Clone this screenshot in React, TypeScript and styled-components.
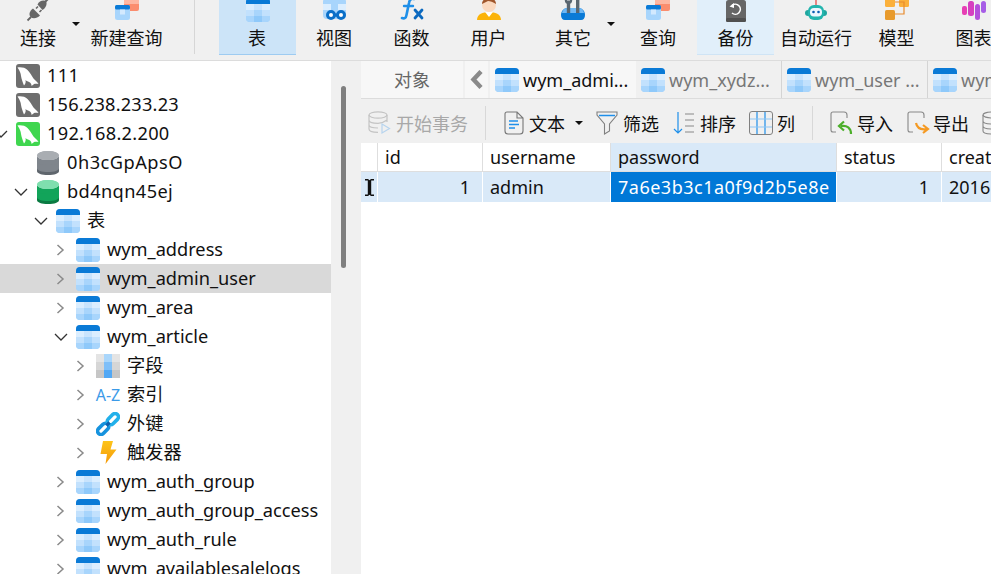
import React from "react";
import styled, { createGlobalStyle } from "styled-components";

const GlobalStyle = createGlobalStyle`
  html, body {
    margin: 0;
    padding: 0;
    background: #fff;
  }
  body {
    font-family: "Noto Sans", "Noto Sans CJK SC", sans-serif;
    font-size: 18px;
    color: #111;
  }
`;

/* ---------- icons ---------- */

function TableIcon({ size = 24 }: { size?: number }) {
  return (
    <svg width={size} height={size} viewBox="0 0 24 24">
      <defs>
        <clipPath id="tbl">
          <rect width="24" height="24" rx="4" />
        </clipPath>
      </defs>
      <g clipPath="url(#tbl)">
        <rect width="24" height="24" fill="#9ed0fb" />
        <rect width="24" height="6" fill="#0a7ad6" />
        <rect y="6" width="8" height="6" fill="#dbeeff" />
        <rect x="8" y="6" width="8" height="6" fill="#c9e4fd" />
        <rect x="16" y="6" width="8" height="6" fill="#dbeeff" />
        <rect y="12" width="8" height="6" fill="#c2e1fd" />
        <rect x="8" y="12" width="8" height="6" fill="#a8d5fc" />
        <rect x="16" y="12" width="8" height="6" fill="#c2e1fd" />
        <rect y="18" width="8" height="6" fill="#a8d5fc" />
        <rect x="8" y="18" width="8" height="6" fill="#8fc9fa" />
        <rect x="16" y="18" width="8" height="6" fill="#a8d5fc" />
      </g>
    </svg>
  );
}

function DolphinIcon({ color }: { color: string }) {
  return (
    <svg width="24" height="24" viewBox="0 0 24 24">
      <rect width="24" height="24" rx="3" fill={color} />
      <path
        d="M1.5 3.5 C5 3 9 3.5 11.5 6 C14 8.5 15.5 11.5 17.5 14.5 C19 16.5 21 17.5 22.5 20 C20.5 19.5 19.5 19.5 18 20 C17 21 16 21.5 15.5 22 C15.5 20.5 15 19.5 14 18.5 C12 17.5 10.5 17 9.5 16 C10 18 9.5 20 8 21.5 C7 19 5.5 15 5 12 C4.8 9.5 4 7 1.5 3.5 Z"
        fill="#fff"
      />
    </svg>
  );
}

function DbIcon({ top, mid, bottom }: { top: string; mid: string; bottom: string }) {
  return (
    <svg width="22" height="24" viewBox="0 0 22 24">
      <path d="M0 17 V20 C0 22.5 4.5 24 11 24 C17.5 24 22 22.5 22 20 V17 Z" fill={bottom} />
      <path d="M0 9 V17 C0 19.5 4.5 21 11 21 C17.5 21 22 19.5 22 17 V9 Z" fill={mid} />
      <ellipse cx="11" cy="4.5" rx="11" ry="4.5" fill={top} />
      <path d="M0 4.5 V10 C0 12.5 4.5 14 11 14 C17.5 14 22 12.5 22 10 V4.5 C22 7 17.5 9 11 9 C4.5 9 0 7 0 4.5 Z" fill={mid} />
      <ellipse cx="11" cy="4.5" rx="11" ry="4.5" fill={top} />
    </svg>
  );
}

function FieldIcon() {
  return (
    <svg width="24" height="24" viewBox="0 0 24 24">
      <rect width="24" height="24" fill="#e4e4e4" />
      <rect y="8" width="24" height="8" fill="#d6d6d6" />
      <rect y="16" width="24" height="8" fill="#c6c6c6" />
      <rect x="8" width="8" height="8" fill="#a9d6fb" />
      <rect x="8" y="8" width="8" height="8" fill="#7fbff8" />
      <rect x="8" y="16" width="8" height="8" fill="#51a8f5" />
    </svg>
  );
}

function LinkIcon() {
  return (
    <svg width="24" height="24" viewBox="0 0 24 24" fill="none">
      <rect x="-7" y="-3.4" width="13" height="6.8" rx="3.4" transform="translate(7.5 16.5) rotate(-45)" stroke="#1793de" strokeWidth="3.6" />
      <rect x="-6" y="-3.4" width="13" height="6.8" rx="3.4" transform="translate(16.5 7.5) rotate(-45)" stroke="#22b0ea" strokeWidth="3.6" />
      <path d="M10.5 13.5 L13.5 10.5" stroke="#0f5fae" strokeWidth="3.2" />
    </svg>
  );
}

function BoltIcon() {
  return (
    <svg width="24" height="24" viewBox="0 0 24 24">
      <defs>
        <linearGradient id="bolt" x1="0" y1="0" x2="0" y2="1">
          <stop offset="0" stopColor="#fdc41a" />
          <stop offset="1" stopColor="#f59a0a" />
        </linearGradient>
      </defs>
      <path d="M7 0 H17 L14.5 8.5 H20.5 L9.5 23 L11 13 H4.5 Z" fill="url(#bolt)" />
    </svg>
  );
}

function PlugIcon() {
  return (
    <svg width="24" height="24" viewBox="0 0 24 24" fill="#666" stroke="none">
      <path d="M11.5 6.5 C13 3 17 1.5 20 3 C21.5 6 20 10 16.5 12 Z" />
      <path d="M19 4 L24 -1" stroke="#666" strokeWidth="2" />
      <path d="M7 10.5 L14 17.5 C11 20.5 7 21 4.5 19 C2.5 16.5 3.5 13 7 10.5 Z" />
      <path d="M5 19 L1.5 22.5" stroke="#666" strokeWidth="1.8" />
      <path d="M10 10.5 L12 8.5 M13.5 14 L15.5 12" stroke="#666" strokeWidth="1.6" />
    </svg>
  );
}

function QueryIcon() {
  return (
    <svg width="24" height="24" viewBox="0 0 24 24">
      <rect x="9" y="-4" width="15" height="17" rx="2" fill="#fb8d6e" />
      <rect x="9" y="2" width="15" height="4" fill="#fdb7a2" />
      <g transform="translate(0 7)">
        <rect width="15" height="15" rx="2.5" fill="#a8d5fc" />
        <rect width="15" height="4.5" rx="1.5" fill="#0a7ad6" />
        <rect x="5" y="4.5" width="5" height="5" fill="#d3e9fe" />
      </g>
    </svg>
  );
}

function ViewIcon() {
  return (
    <svg width="24" height="24" viewBox="0 0 24 24">
      <rect width="23" height="21" rx="4" fill="#a8d5fc" />
      <rect y="6" width="8" height="6" fill="#dbeeff" />
      <rect x="15" y="6" width="8" height="6" fill="#dbeeff" />
      <circle cx="8" cy="17" r="3.5" fill="#fff" stroke="#0a6fc8" strokeWidth="3" />
      <circle cx="18" cy="17" r="3.5" fill="#fff" stroke="#0a6fc8" strokeWidth="3" />
      <rect x="10" y="15.6" width="6" height="3" fill="#0a6fc8" />
    </svg>
  );
}

function FxIcon() {
  return (
    <svg width="24" height="24" viewBox="0 0 24 24" fill="none" strokeLinecap="round">
      <path d="M14 1 C11 0 9.5 2 9 5 L6.5 17 C6 20 4.5 21 2 20" stroke="#1f8fe8" strokeWidth="2.6" />
      <path d="M4 8 H13" stroke="#1f8fe8" strokeWidth="2.4" />
      <path d="M15 12 L22 20 M22 12 L15 20" stroke="#0b69bf" strokeWidth="2.8" />
    </svg>
  );
}

function UserIcon() {
  return (
    <svg width="24" height="24" viewBox="0 0 24 24">
      <path d="M0 22 C0 16 6 14 12 14 C18 14 24 16 24 22 Z" fill="#fbb30a" />
      <path d="M8 14 H16 L12 19 Z" fill="#fff" />
      <circle cx="12" cy="7" r="7" fill="#fbd9bf" />
      <path d="M5 6 C5 -2 19 -2 19 6 C16 4 13 3 11 3 C9 4 7 5 5 6 Z" fill="#a0562b" />
    </svg>
  );
}

function ToolsIcon() {
  return (
    <svg width="24" height="24" viewBox="0 0 24 24">
      <path d="M0 17 C0 13 3 10 6 10 H18 C21 10 24 13 24 17 C24 20 22.5 22 20 22 H4 C1.5 22 0 20 0 17 Z" fill="#0a7ad6" />
      <path d="M1 15 C1.5 12 3.5 10 6 10 H18 C20.5 10 22.5 12 23 15 Z" fill="#6fb8f5" />
      <rect x="5.8" y="4" width="3.4" height="11" fill="#5a6670" />
      <rect x="15" y="1" width="3.4" height="14" fill="#5a6670" />
      <path d="M3.8 0 V2.5 C3.8 5 5.5 6 7.5 6 C9.5 6 11.2 5 11.2 2.5 V0 H9 V2.5 H6 V0 Z" fill="#5a6670" />
    </svg>
  );
}

function BackupIcon() {
  return (
    <svg width="20" height="22" viewBox="0 0 20 22">
      <rect width="20" height="22" rx="2.5" fill="#666" />
      <rect y="18" width="20" height="4" rx="1.5" fill="#505050" />
      <path d="M6 5.5 A5 5 0 1 1 6 13" fill="none" stroke="#fff" strokeWidth="1.6" />
      <path d="M3.5 6.5 L8 3 V8 Z" fill="#fff" />
    </svg>
  );
}

function RobotIcon() {
  return (
    <svg width="22" height="22" viewBox="0 0 22 22">
      <rect x="0" y="10" width="22" height="6" rx="3" fill="#1fa7a0" />
      <rect x="3" y="5" width="16" height="15" rx="6" fill="#24b5ae" />
      <rect x="5" y="8" width="12" height="8.5" rx="4" fill="#eef7ff" />
      <circle cx="8.5" cy="12" r="1.3" fill="#0a5fb4" />
      <circle cx="13.5" cy="12" r="1.3" fill="#0a5fb4" />
      <rect x="10.3" y="0" width="1.4" height="5" fill="#e25b5b" />
    </svg>
  );
}

function ModelIcon() {
  return (
    <svg width="24" height="24" viewBox="0 0 24 24" fill="#fbb03b">
      <rect x="0" y="-2" width="10" height="11" rx="1.5" />
      <rect x="14" y="-2" width="10" height="11" rx="1.5" />
      <rect x="0" y="12" width="10" height="10" rx="1.5" fill="#e89a2c" />
      <path d="M10 4 H19 V16 H10" fill="none" stroke="#e88a2c" strokeWidth="1.2" />
    </svg>
  );
}

function ChartIcon() {
  return (
    <svg width="24" height="24" viewBox="0 0 24 24">
      <rect x="0" y="8" width="5" height="9" rx="2" fill="#e63fb4" />
      <rect x="6" y="3" width="6" height="15" rx="2.5" fill="#d63fc0" />
      <rect x="13" y="6" width="5" height="16" rx="2.5" fill="#b44fdc" />
      <rect x="19" y="3" width="5" height="12" rx="2.5" fill="#a65ce6" />
    </svg>
  );
}

function TxIcon() {
  return (
    <svg width="23" height="24" viewBox="0 0 23 24" fill="none" stroke="#c4c4c4" strokeWidth="1.2">
      <ellipse cx="10" cy="4" rx="9" ry="3.2" />
      <path d="M1 4 V18 C1 20 5 21.3 10 21.3 M19 4 V11 M1 9 C1 11 5 12.3 10 12.3 C12 12.3 15 12 19 9 M1 14 C1 16 5 17 10 17" />
      <path d="M14 13 L21.5 17.5 L14 22 Z" stroke="#b7d4ee" />
    </svg>
  );
}

function TextIcon() {
  return (
    <svg width="20" height="24" viewBox="0 0 20 24" fill="none">
      <path d="M3 1 H13 L19 7 V20 C19 22 18 23 16 23 H4 C2 23 1 22 1 20 V3 C1 2 2 1 3 1 Z M13 1 V7 H19" stroke="#777" strokeWidth="1.1" />
      <path d="M5 10 H14 M5 13.5 H15 M5 17 H11" stroke="#1e8fea" strokeWidth="1.4" />
    </svg>
  );
}

function FilterIcon() {
  return (
    <svg width="22" height="24" viewBox="0 0 22 24" fill="none">
      <path d="M1 1 H21 V4 L13.5 13 V20 L8.5 23 V13 L1 4 Z" stroke="#808080" strokeWidth="1.1" />
      <path d="M3 4.5 H19" stroke="#1e8fea" strokeWidth="1.5" />
    </svg>
  );
}

function SortIcon() {
  return (
    <svg width="22" height="24" viewBox="0 0 22 24" fill="none">
      <path d="M5 1 V22 M1 18 L5 22 L9 18" stroke="#1e8fea" strokeWidth="1.2" />
      <path d="M12 3 H21 M12 9 H21 M12 15 H21 M12 21 H21" stroke="#888" strokeWidth="1.2" />
    </svg>
  );
}

function ColumnIcon() {
  return (
    <svg width="24" height="24" viewBox="0 0 24 24" fill="none">
      <rect x="0.5" y="0.5" width="23" height="23" rx="2.5" stroke="#808080" />
      <path d="M8 1 V23 M16 1 V23" stroke="#1e8fea" strokeWidth="1.2" />
      <path d="M1 8 H23 M1 16 H23" stroke="#8ec6f4" strokeWidth="1.2" />
    </svg>
  );
}

function ImportIcon({ color, flip }: { color: string; flip?: boolean }) {
  return (
    <svg width="24" height="24" viewBox="0 0 24 24" fill="none">
      <path d="M6 21 H3 C1.5 21 1 20 1 19 V3 C1 2 1.5 1 3 1 H14 C16 1 17 2 17 4 V7" stroke="#888" strokeWidth="1.1" />
      {flip ? (
        <path d="M9 12 C10 17 14 19 20 18 M16 14 L21 18 L16 22" stroke={color} strokeWidth="2.2" />
      ) : (
        <path d="M21 23 C21 17 17 14 11 15 M14 10.5 L9 15 L14 19.5" stroke={color} strokeWidth="2.2" />
      )}
    </svg>
  );
}

function DbOutline() {
  return (
    <svg width="24" height="24" viewBox="0 0 24 24" fill="none" stroke="#888" strokeWidth="1.1">
      <ellipse cx="10" cy="4" rx="9" ry="3" />
      <path d="M1 4 V20 C1 22 5 23 10 23 C15 23 19 22 19 20 V4 M1 10 C1 12 5 13 10 13 C15 13 19 12 19 10 M1 15 C1 17 5 18 10 18 C15 18 19 17 19 15" />
    </svg>
  );
}

function Chevron({ open }: { open?: boolean }) {
  return (
    <svg width="14" height="12" viewBox="0 0 14 12" fill="none">
      {open ? (
        <path d="M1 3 L7 9 L13 3" stroke="#333" strokeWidth="1.3" />
      ) : (
        <path d="M3.5 1 L9 6 L3.5 11" stroke="#8a8a8a" strokeWidth="1.5" />
      )}
    </svg>
  );
}

function CursorIcon() {
  return (
    <svg width="9" height="17" viewBox="0 0 9 17" fill="#111">
      <path d="M0 0 H3 L4.5 1.2 L6 0 H9 V1.5 H6.2 V15.5 H9 V17 H6 L4.5 15.8 L3 17 H0 V15.5 H2.8 V1.5 H0 Z" />
    </svg>
  );
}

/* ---------- top toolbar ---------- */

const Page = styled.div`
  width: 991px;
  height: 574px;
  overflow: hidden;
  display: flex;
  flex-direction: column;
  background: #fff;
`;

const Toolbar = styled.div`
  height: 60px;
  flex: none;
  display: flex;
  background: #f0f0f0;
  border-bottom: 1px solid #dcdcdc;
  overflow: hidden;
`;

const ToolItem = styled.div<{ $w: number; $ml?: number; $state?: "on" | "soft" }>`
  position: relative;
  flex: none;
  width: ${(p) => p.$w}px;
  height: 55px;
  margin-left: ${(p) => p.$ml ?? 0}px;
  display: flex;
  flex-direction: column;
  align-items: center;
  box-sizing: border-box;
  background: ${(p) => (p.$state === "on" ? "#cce4f8" : p.$state === "soft" ? "#e1effa" : "transparent")};
  border-bottom: ${(p) =>
    p.$state === "on" ? "1px solid #9dcbf1" : p.$state === "soft" ? "1px solid #cfe4f5" : "1px solid transparent"};
`;

const ToolIconBox = styled.div`
  height: 22px;
  display: flex;
  align-items: flex-end;
  justify-content: center;
  overflow: visible;
`;

const ToolLabel = styled.div<{ $nudge?: number }>`
  margin-top: 6px;
  margin-right: ${(p) => p.$nudge ?? 0}px;
  font-size: 18px;
  line-height: 21px;
  white-space: nowrap;
`;

const Caret = styled.span<{ $right: number }>`
  position: absolute;
  top: 22px;
  right: ${(p) => p.$right}px;
  width: 0;
  height: 0;
  border-left: 4px solid transparent;
  border-right: 4px solid transparent;
  border-top: 4px solid #111;
`;

const ToolDivider = styled.div`
  flex: none;
  width: 1px;
  height: 54px;
  margin: 0 24px;
  background: #d6d6d6;
`;

/* ---------- tree ---------- */

const Body = styled.div`
  flex: 1;
  min-height: 0;
  display: flex;
`;

const Sidebar = styled.div`
  flex: none;
  width: 331px;
  overflow: hidden;
  background: #fff;
`;

const TreeRow = styled.div<{ $selected?: boolean }>`
  height: 29px;
  display: flex;
  align-items: center;
  background: ${(p) => (p.$selected ? "#d9d9d9" : "transparent")};
  white-space: nowrap;
`;

const TreeChevron = styled.span<{ $level: number }>`
  flex: none;
  width: 22px;
  margin-left: ${(p) => p.$level * 20 - 6}px;
  display: flex;
  justify-content: flex-start;
`;

const TreeIcon = styled.span`
  flex: none;
  width: 24px;
  height: 24px;
  display: flex;
  align-items: center;
  justify-content: center;
`;

const TreeText = styled.span<{ $spacing?: number }>`
  margin-left: 7px;
  margin-bottom: 2px;
  font-size: 18.2px;
  line-height: 24px;
  letter-spacing: ${(p) => p.$spacing ?? 0}px;
`;

const AzLabel = styled.span`
  font-size: 16px;
  color: #3b9ae8;
  white-space: nowrap;
`;

const ScrollGutter = styled.div`
  flex: none;
  width: 30px;
  background: #f0f0f0;
  padding: 25px 0 0 10px;
  box-sizing: border-box;
`;

const ScrollThumb = styled.div`
  width: 5px;
  height: 182px;
  border-radius: 3px;
  background: #7f7f7f;
`;

/* ---------- right side ---------- */

const Main = styled.div`
  flex: 1;
  min-width: 0;
  display: flex;
  flex-direction: column;
  overflow: hidden;
`;

const TabBar = styled.div`
  height: 37px;
  flex: none;
  display: flex;
  background: #f0f0f0;
  border-bottom: 1px solid #dcdcdc;
`;

const ObjectTab = styled.div`
  flex: none;
  width: 102px;
  padding-bottom: 2px;
  box-sizing: border-box;
  display: flex;
  align-items: center;
  justify-content: center;
  background: #f7f7f7;
  color: #666;
`;

const ArrowTab = styled.div`
  flex: none;
  width: 23px;
  margin: 0 2px;
  display: flex;
  align-items: center;
  justify-content: center;
  background: #f7f7f7;
`;

const Tab = styled.div<{ $active?: boolean }>`
  flex: none;
  width: 146px;
  box-sizing: border-box;
  display: flex;
  align-items: center;
  padding-left: 5px;
  gap: 4px;
  white-space: nowrap;
  font-size: 18px;
  color: ${(p) => (p.$active ? "#111" : "#777")};
  background: ${(p) => (p.$active ? "#f7f7f7" : "transparent")};
  border-right: ${(p) => (p.$active ? "none" : "1px solid #d4d4d4")};
`;

const ActionBar = styled.div`
  height: 44px;
  flex: none;
  box-sizing: border-box;
  display: flex;
  align-items: center;
  padding: 4px 0 0 7px;
  background: #f0f0f0;
`;

const Action = styled.div<{ $ml: number; $gap?: number; $muted?: boolean }>`
  flex: none;
  display: flex;
  align-items: center;
  gap: ${(p) => p.$gap ?? 5}px;
  margin-left: ${(p) => p.$ml}px;
  font-size: 18px;
  white-space: nowrap;
  color: ${(p) => (p.$muted ? "#a8a8a8" : "#111")};
`;

const ActionDivider = styled.div<{ $ml: number }>`
  flex: none;
  width: 1px;
  height: 34px;
  margin-left: ${(p) => p.$ml}px;
  background: #d8d8d8;
`;

const SmallCaret = styled.span`
  margin-left: 5px;
  width: 0;
  height: 0;
  border-left: 4px solid transparent;
  border-right: 4px solid transparent;
  border-top: 4px solid #111;
`;

const Grid = styled.div`
  display: grid;
  grid-template-columns: 17px 105px 128px 226px 105px 120px;
  background: #fff;
`;

const HeadCell = styled.div<{ $selected?: boolean }>`
  height: 29px;
  box-sizing: border-box;
  padding-left: 7px;
  display: flex;
  align-items: center;
  font-size: 18px;
  white-space: nowrap;
  overflow: hidden;
  background: ${(p) => (p.$selected ? "#d9e9f8" : "#fff")};
  border-right: 1px solid #dedede;
  border-bottom: 1px solid #dedede;
`;

const Cell = styled.div<{ $selected?: boolean; $right?: boolean; $spacing?: number }>`
  height: 31px;
  box-sizing: border-box;
  padding: 0 ${(p) => (p.$right ? 12 : 7)}px 0 7px;
  display: flex;
  align-items: center;
  justify-content: ${(p) => (p.$right ? "flex-end" : "flex-start")};
  font-size: 18px;
  letter-spacing: ${(p) => p.$spacing ?? 0}px;
  white-space: nowrap;
  overflow: hidden;
  color: ${(p) => (p.$selected ? "#fff" : "#111")};
  background: ${(p) => (p.$selected ? "#0078d7" : "#d9e9f8")};
  border-right: 1px solid #fff;
  border-bottom: 1px solid #fff;
`;

const GutterCell = styled(Cell)`
  padding: 0;
  justify-content: center;
`;

const tools = [
  { label: "连接", w: 76, icon: <PlugIcon />, caret: -4 },
  { label: "新建查询", w: 87, ml: 7, icon: <QueryIcon /> },
];

const objects = [
  { label: "表", w: 77, nudge: 1, icon: <TableIcon />, state: "on" as const },
  { label: "视图", w: 77, nudge: 1, icon: <ViewIcon /> },
  { label: "函数", w: 77, icon: <FxIcon /> },
  { label: "用户", w: 77, icon: <UserIcon /> },
  { label: "其它", w: 92, icon: <ToolsIcon />, caret: 4 },
  { label: "查询", w: 78, icon: <QueryIcon /> },
  { label: "备份", w: 77, icon: <BackupIcon />, state: "soft" as const },
  { label: "自动运行", w: 84, icon: <RobotIcon /> },
  { label: "模型", w: 77, icon: <ModelIcon /> },
  { label: "图表", w: 77, icon: <ChartIcon /> },
];

type Row = {
  text: string;
  level: number;
  chevron?: "open" | "closed";
  icon: React.ReactNode;
  selected?: boolean;
  spacing?: number;
};

const gray = <DolphinIcon color="#6e6e6e" />;
const table = <TableIcon />;

const treeRows: Row[] = [
  { text: "111", level: 0, icon: gray, spacing: 0.3 },
  { text: "156.238.233.23", level: 0, icon: gray, spacing: 0.2 },
  { text: "192.168.2.200", level: 0, chevron: "open", icon: <DolphinIcon color="#3fd64f" />, spacing: 0.3 },
  { text: "0h3cGpApsO", level: 1, icon: <DbIcon top="#a9adb2" mid="#7f858c" bottom="#5f666d" />, spacing: 0.5 },
  { text: "bd4nqn45ej", level: 1, chevron: "open", icon: <DbIcon top="#7fdfae" mid="#12a45a" bottom="#0a7a42" />, spacing: 0.4 },
  { text: "表", level: 2, chevron: "open", icon: table },
  { text: "wym_address", level: 3, chevron: "closed", icon: table },
  { text: "wym_admin_user", level: 3, chevron: "closed", icon: table, selected: true },
  { text: "wym_area", level: 3, chevron: "closed", icon: table },
  { text: "wym_article", level: 3, chevron: "open", icon: table },
  { text: "字段", level: 4, chevron: "closed", icon: <FieldIcon /> },
  { text: "索引", level: 4, chevron: "closed", icon: <AzLabel>A-Z</AzLabel> },
  { text: "外键", level: 4, chevron: "closed", icon: <LinkIcon /> },
  { text: "触发器", level: 4, chevron: "closed", icon: <BoltIcon /> },
  { text: "wym_auth_group", level: 3, chevron: "closed", icon: table },
  { text: "wym_auth_group_access", level: 3, chevron: "closed", icon: table },
  { text: "wym_auth_rule", level: 3, chevron: "closed", icon: table },
  { text: "wym_availablesalelogs", level: 3, chevron: "closed", icon: table },
];

const columns = ["id", "username", "password", "status", "creat"];

export default function App() {
  return (
    <Page>
      <GlobalStyle />
      <Toolbar>
        {tools.map((t) => (
          <ToolItem key={t.label} $w={t.w} $ml={t.ml}>
            <ToolIconBox>{t.icon}</ToolIconBox>
            <ToolLabel>{t.label}</ToolLabel>
            {t.caret !== undefined && <Caret $right={t.caret} />}
          </ToolItem>
        ))}
        <ToolDivider />
        {objects.map((t) => (
          <ToolItem key={t.label} $w={t.w} $state={t.state}>
            <ToolIconBox>{t.icon}</ToolIconBox>
            <ToolLabel $nudge={t.nudge}>{t.label}</ToolLabel>
            {t.caret !== undefined && <Caret $right={t.caret} />}
          </ToolItem>
        ))}
      </Toolbar>
      <Body>
        <Sidebar>
          {treeRows.map((r) => (
            <TreeRow key={r.text} $selected={r.selected}>
              <TreeChevron $level={r.level}>
                {r.chevron && <Chevron open={r.chevron === "open"} />}
              </TreeChevron>
              <TreeIcon>{r.icon}</TreeIcon>
              <TreeText $spacing={r.spacing}>{r.text}</TreeText>
            </TreeRow>
          ))}
        </Sidebar>
        <ScrollGutter>
          <ScrollThumb />
        </ScrollGutter>
        <Main>
          <TabBar>
            <ObjectTab>对象</ObjectTab>
            <ArrowTab>
              <svg width="13" height="19" viewBox="0 0 13 19">
                <path d="M11 1.5 L3.5 9.5 L11 17.5" fill="none" stroke="#8a8a8a" strokeWidth="4.4" />
              </svg>
            </ArrowTab>
            <Tab $active>
              <TableIcon />
              wym_admi...
            </Tab>
            <Tab>
              <TableIcon />
              wym_xydz...
            </Tab>
            <Tab>
              <TableIcon />
              wym_user ...
            </Tab>
            <Tab>
              <TableIcon />
              wym
            </Tab>
          </TabBar>
          <ActionBar>
            <Action $ml={0} $muted>
              <TxIcon />
              开始事务
            </Action>
            <ActionDivider $ml={17} />
            <Action $ml={18}>
              <TextIcon />
              文本
              <SmallCaret />
            </Action>
            <Action $ml={13}>
              <FilterIcon />
              筛选
            </Action>
            <Action $ml={14}>
              <SortIcon />
              排序
            </Action>
            <Action $ml={13} $gap={4}>
              <ColumnIcon />
              列
            </Action>
            <ActionDivider $ml={17} />
            <Action $ml={17} $gap={3}>
              <ImportIcon color="#4caf2a" />
              导入
            </Action>
            <Action $ml={14} $gap={2}>
              <ImportIcon color="#f59a23" flip />
              导出
            </Action>
            <Action $ml={13}>
              <DbOutline />
            </Action>
          </ActionBar>
          <Grid>
            <HeadCell />
            {columns.map((c) => (
              <HeadCell key={c} $selected={c === "password"}>
                {c}
              </HeadCell>
            ))}
            <GutterCell>
              <CursorIcon />
            </GutterCell>
            <Cell $right>1</Cell>
            <Cell>admin</Cell>
            <Cell $selected $spacing={0.5}>
              7a6e3b3c1a0f9d2b5e8e
            </Cell>
            <Cell $right>1</Cell>
            <Cell>2016</Cell>
          </Grid>
        </Main>
      </Body>
    </Page>
  );
}
